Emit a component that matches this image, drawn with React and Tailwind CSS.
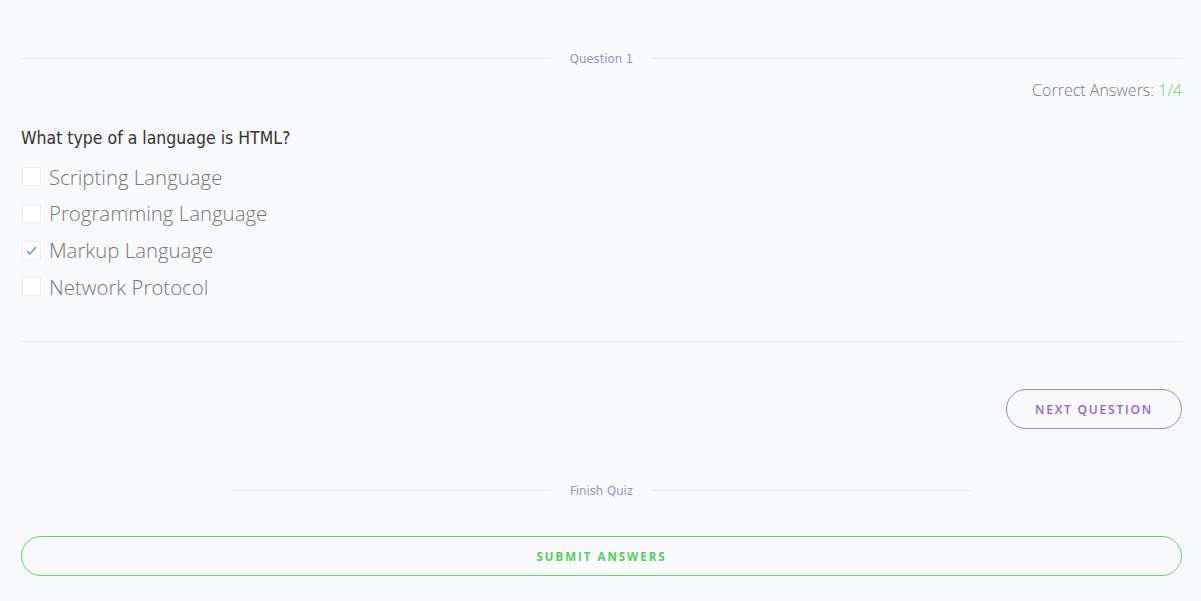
import React, { useState } from 'react';

const OPTIONS = [
  'Scripting Language',
  'Programming Language',
  'Markup Language',
  'Network Protocol',
];

const HEAD_FONT = { fontFamily: '"DejaVu Sans Condensed", "Noto Sans", sans-serif' };

function Divider({ label, className = '' }) {
  return (
    <div className={`flex items-center ${className}`}>
      <div className="flex-1 h-px bg-[#e9ebef]" />
      <span className="px-[19px] text-[13px] text-[#8e96a6] leading-none" style={HEAD_FONT}>
        {label}
      </span>
      <div className="flex-1 h-px bg-[#e9ebef]" />
    </div>
  );
}

export default function App() {
  const [checked, setChecked] = useState([2]);

  const toggle = (i) => {
    setChecked(checked.includes(i) ? checked.filter((c) => c !== i) : [...checked, i]);
  };

  return (
    <div className="min-h-[601px] bg-[#f8f9fb] pl-[21px] pr-[19px] pt-[52px] font-['Open_Sans',sans-serif]">
      <Divider label="Question 1" />

      <div className="mt-[15px] text-right text-[16px] font-light text-[#7a7a7a] leading-[20px]">
        Correct Answers: <span className="text-[#5ed16d]">1/4</span>
      </div>

      <h2 className="mt-[26px] text-[17.5px] font-medium text-[#333] leading-[24px]" style={HEAD_FONT}>
        What type of a language is HTML?
      </h2>

      <ul className="mt-[13px] flex flex-col gap-[9px]">
        {OPTIONS.map((opt, i) => (
          <li key={opt} className="flex items-center h-[27.7px] cursor-pointer" onClick={() => toggle(i)}>
            <span className="w-[19px] h-[19px] ml-[1px] border border-[#eceef2] bg-white flex items-center justify-center">
              {checked.includes(i) && (
                <svg width="11" height="9" viewBox="0 0 11 9" fill="none">
                  <path d="M1 5l3 3l6-7" stroke="#4a90e2" strokeWidth="1.2" />
                </svg>
              )}
            </span>
            <span className="ml-[8px] text-[20.4px] font-light text-[#767676] leading-none">{opt}</span>
          </li>
        ))}
      </ul>

      <div className="mt-[40px] h-px bg-[#e9ebef]" />

      <div className="mt-[47px] flex justify-end">
        <button className="w-[176px] h-[40px] pt-[2px] rounded-full border border-[#a67de6] text-[12px] font-semibold tracking-[1.8px] text-[#8d63dd] uppercase">
          Next Question
        </button>
      </div>

      <Divider label="Finish Quiz" className="mt-[55px] mx-[211px]" />

      <button className="mt-[39px] w-full h-[40px] pt-[2px] rounded-full border border-[#5ed16d] text-[11.5px] font-bold tracking-[2px] text-[#4fcf60] uppercase">
        Submit Answers
      </button>
    </div>
  );
}
